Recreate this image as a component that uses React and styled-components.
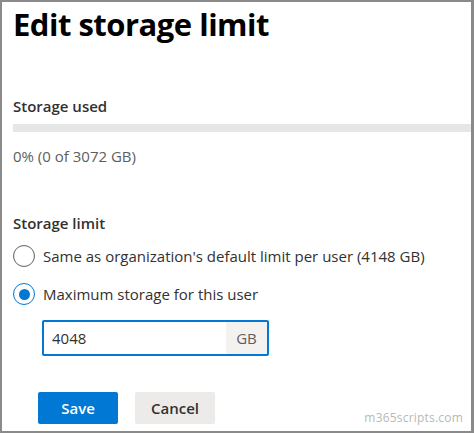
import React from 'react'
import styled, { createGlobalStyle } from 'styled-components'

const GlobalStyle = createGlobalStyle`
    html, body {
        margin: 0;
        padding: 0;
        background: #fff;
    }
    body {
        font-family: 'Open Sans', 'Noto Sans', sans-serif;
        color: #323130;
    }
`

function App() {
    return (
        <>
            <GlobalStyle />
            <Frame>
                <Title>Edit storage limit</Title>
                <Section>
                    <Label>Storage used</Label>
                    <Track>
                        <Fill style={{ width: '0%' }} />
                    </Track>
                    <Usage>0% (0 of 3072 GB)</Usage>
                </Section>
                <LimitSection>
                    <Label>Storage limit</Label>
                    <Options>
                        <Option>
                            <Radio />
                            <OptionText>
                                Same as organization's default limit per user (4148 GB)
                            </OptionText>
                        </Option>
                        <Option>
                            <Radio checked />
                            <OptionText>Maximum storage for this user</OptionText>
                        </Option>
                    </Options>
                    <Field>
                        <Input defaultValue="4048" />
                        <Suffix>GB</Suffix>
                    </Field>
                </LimitSection>
                <Footer>
                    <Button primary>Save</Button>
                    <Button>Cancel</Button>
                    <Watermark>m365scripts.com</Watermark>
                </Footer>
            </Frame>
        </>
    )
}

export default App

const Frame = styled.div`
    box-sizing: border-box;
    width: 474px;
    height: 433px;
    border: 2px solid #8a8a8a;
    border-right-width: 3px;
    padding: 0 0 0 11px;
    display: flex;
    flex-direction: column;
    overflow: hidden;
`

const Title = styled.h1`
    margin: 0;
    padding-top: 1px;
    font-size: 31px;
    font-weight: 700;
    line-height: 42px;
    color: #000;
    letter-spacing: -0.5px;
`

const Section = styled.div`
    margin-top: 51px;
    display: flex;
    flex-direction: column;
`

const Label = styled.div`
    font-size: 15px;
    font-weight: 600;
    line-height: 20px;
    color: #323130;
`

const Track = styled.div`
    margin-top: 8px;
    height: 8px;
    background: #e6e6e6;
`

const Fill = styled.div`
    height: 100%;
    background: #0078d4;
`

const Usage = styled.div`
    margin-top: 14px;
    font-size: 15px;
    line-height: 20px;
    color: #605e5c;
`

const LimitSection = styled.div`
    margin-top: 47px;
    display: flex;
    flex-direction: column;
`

const Options = styled.div`
    margin-top: 12px;
    display: flex;
    flex-direction: column;
    gap: 16px;
`

const Option = styled.label`
    display: flex;
    align-items: center;
    gap: 8px;
`

const Radio = styled.span`
    box-sizing: border-box;
    width: 22px;
    height: 22px;
    border-radius: 50%;
    border: 1.5px solid ${(p) => (p.checked ? '#0078d4' : '#605e5c')};
    display: flex;
    align-items: center;
    justify-content: center;
    flex-shrink: 0;
    &::after {
        content: '';
        display: ${(p) => (p.checked ? 'block' : 'none')};
        width: 11px;
        height: 11px;
        border-radius: 50%;
        background: #0078d4;
    }
`

const OptionText = styled.span`
    font-size: 15px;
    line-height: 22px;
    color: #323130;
`

const Field = styled.div`
    box-sizing: border-box;
    margin-top: 15px;
    margin-left: 29px;
    width: 227px;
    height: 36px;
    border: 2px solid #0078d4;
    border-radius: 2px;
    display: flex;
`

const Input = styled.input`
    flex: 1;
    min-width: 0;
    border: none;
    outline: none;
    padding: 0 8px;
    font-family: inherit;
    font-size: 15px;
    color: #323130;
    background: #fff;
`

const Suffix = styled.span`
    width: 41px;
    display: flex;
    align-items: center;
    justify-content: center;
    background: #f3f2f1;
    font-size: 15px;
    color: #605e5c;
`

const Footer = styled.div`
    margin-top: 36px;
    padding-left: 25px;
    display: flex;
    gap: 17px;
    position: relative;
`

const Button = styled.button`
    box-sizing: border-box;
    width: 80px;
    height: 32px;
    border: none;
    border-radius: 2px;
    font-family: inherit;
    font-size: 15px;
    font-weight: 600;
    background: ${(p) => (p.primary ? '#0078d4' : '#edebe9')};
    color: ${(p) => (p.primary ? '#fff' : '#323130')};
`

const Watermark = styled.span`
    position: absolute;
    right: 8px;
    top: 17px;
    font-size: 12px;
    color: #b8b8b8;
    letter-spacing: 0.2px;
`
